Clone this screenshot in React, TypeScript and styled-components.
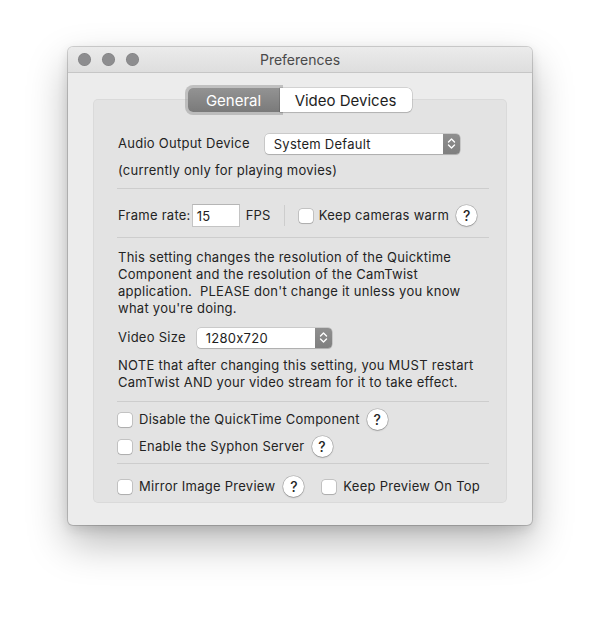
import React from "react";
import styled, { createGlobalStyle } from "styled-components";

const Global = createGlobalStyle`
  html, body { margin: 0; padding: 0; background: #ffffff; }
  body {
    font-family: Inter, "Liberation Sans", sans-serif;
    -webkit-font-smoothing: antialiased;
    font-feature-settings: "calt" 0;
  }
`;

const Stage = styled.div`
  width: 600px;
  height: 618px;
  padding: 47px 0 0 68px;
  box-sizing: border-box;
`;

const Window = styled.div`
  width: 464px;
  height: 478px;
  background: #ececec;
  border-radius: 5px;
  box-shadow: 0 0 0 1px rgba(0, 0, 0, 0.16), 0 18px 40px rgba(0, 0, 0, 0.28), 0 4px 12px rgba(0, 0, 0, 0.12);
  display: flex;
  flex-direction: column;
  overflow: hidden;
`;

const TitleBar = styled.div`
  height: 25px;
  flex: none;
  background: linear-gradient(#ebebeb, #dedede);
  border-bottom: 1px solid #c6c6c6;
  display: flex;
  align-items: center;
  position: relative;
  padding-left: 10px;
`;

const Lights = styled.div`
  display: flex;
  gap: 11px;
`;

const Light = styled.span`
  width: 13px;
  height: 13px;
  border-radius: 50%;
  background: #8d8d8f;
  box-shadow: inset 0 0 0 0.5px rgba(0, 0, 0, 0.15);
`;

const Title = styled.div`
  position: absolute;
  left: 0;
  right: 0;
  top: 0;
  bottom: 0;
  display: flex;
  align-items: center;
  justify-content: center;
  font-size: 14px;
  color: #4a4a4a;
  pointer-events: none;
`;

const Body = styled.div`
  flex: 1;
  display: flex;
  flex-direction: column;
  padding: 15px 25px 22px;
`;

const Tabs = styled.div`
  align-self: center;
  display: flex;
  height: 24px;
  margin-bottom: -13px;
  margin-left: -1px;
  position: relative;
  z-index: 1;
`;

const Tab = styled.div<{ $active?: boolean }>`
  display: flex;
  align-items: center;
  justify-content: center;
  font-size: 15px;
  box-sizing: border-box;
  ${(p) =>
    p.$active
      ? `
    width: 92px;
    color: #ffffff;
    background: linear-gradient(#939393, #7a7a7a);
    border-radius: 5px 0 0 5px;
    box-shadow: 0 0 0 3px rgba(140,140,140,0.45);
  `
      : `
    width: 132px;
    color: #1e1e1e;
    background: #ffffff;
    border-radius: 0 5px 5px 0;
    box-shadow: 0 0 0 0.5px rgba(0,0,0,0.22), 0 1px 1px rgba(0,0,0,0.12);
  `}
`;

const Group = styled.div`
  flex: 1;
  background: #e3e3e3;
  border-radius: 5px;
  box-shadow: inset 0 0 0 1px rgba(0, 0, 0, 0.04);
  padding: 34px 18px 0 25px;
  display: flex;
  flex-direction: column;
  color: #232323;
  font-size: 13px;
  letter-spacing: 0.26px;
`;

const Row = styled.div<{ $mt?: number; $h?: number }>`
  display: flex;
  align-items: center;
  margin-top: ${(p) => p.$mt ?? 0}px;
  height: ${(p) => p.$h ?? 21}px;
  white-space: nowrap;
`;

const Label = styled.span<{ $ml?: number }>`
  margin-left: ${(p) => p.$ml ?? 0}px;
  line-height: 17px;
`;

const Text = styled.div<{ $mt?: number }>`
  margin-top: ${(p) => p.$mt ?? 0}px;
  line-height: 17px;
  white-space: pre;
`;

const Sep = styled.div<{ $mt?: number }>`
  margin-top: ${(p) => p.$mt ?? 0}px;
  height: 1px;
  background: #cdcdcd;
  margin-left: -1px;
  flex: none;
`;

const VSep = styled.div`
  width: 1px;
  height: 21px;
  background: #cdcdcd;
  margin: 0 14px 0 13px;
`;

const Popup = styled.div<{ $w: number; $ml: number }>`
  width: ${(p) => p.$w}px;
  height: 20px;
  margin-left: ${(p) => p.$ml}px;
  background: #ffffff;
  border-radius: 4px;
  box-shadow: 0 0 0 0.5px rgba(0, 0, 0, 0.22), 0 1px 1px rgba(0, 0, 0, 0.14);
  display: flex;
  align-items: center;
  overflow: hidden;
`;

const PopupValue = styled.span`
  flex: 1;
  padding-left: 9px;
  color: #1e1e1e;
`;

const Stepper = styled.div`
  width: 17px;
  height: 100%;
  background: linear-gradient(#8f8f8f, #7f7f7f);
  display: flex;
  align-items: center;
  justify-content: center;
`;

const Field = styled.div`
  width: 48px;
  height: 23px;
  margin-left: 1px;
  box-sizing: border-box;
  background: #ffffff;
  border: 1px solid #c4c4c4;
  border-top-color: #b5b5b5;
  padding-left: 4px;
  display: flex;
  align-items: center;
  font-size: 13px;
`;

const Check = styled.span<{ $ml?: number }>`
  width: 14px;
  height: 14px;
  margin-left: ${(p) => p.$ml ?? 0}px;
  flex: none;
  background: #ffffff;
  border-radius: 3px;
  box-shadow: 0 0 0 0.5px rgba(0, 0, 0, 0.28), 0 1px 1px rgba(0, 0, 0, 0.12);
`;

const Help = styled.span<{ $ml?: number }>`
  width: 21px;
  height: 21px;
  margin-left: ${(p) => p.$ml ?? 0}px;
  flex: none;
  border-radius: 50%;
  background: #ffffff;
  box-shadow: 0 0 0 0.5px rgba(0, 0, 0, 0.25), 0 1px 1.5px rgba(0, 0, 0, 0.2);
  display: flex;
  align-items: center;
  justify-content: center;
  font-size: 14px;
  font-weight: 500;
  letter-spacing: 0;
  color: #262626;
`;

const StepIcon = () => (
  <svg width="9" height="13" viewBox="0 0 9 13">
    <path d="M1.5 5 L4.5 2 L7.5 5 M1.5 8 L4.5 11 L7.5 8" fill="none" stroke="#fff" strokeWidth="1.4" strokeLinecap="round" strokeLinejoin="round" />
  </svg>
);

export default function App() {
  return (
    <>
      <Global />
      <Stage>
        <Window>
          <TitleBar>
            <Lights>
              <Light />
              <Light />
              <Light />
            </Lights>
            <Title>Preferences</Title>
          </TitleBar>
          <Body>
            <Tabs>
              <Tab $active>General</Tab>
              <Tab>Video Devices</Tab>
            </Tabs>
            <Group>
              <Row $h={21}>
                <Label>Audio Output Device</Label>
                <Popup $w={195} $ml={15}>
                  <PopupValue>System Default</PopupValue>
                  <Stepper>
                    <StepIcon />
                  </Stepper>
                </Popup>
              </Row>
              <Text $mt={8}>(currently only for playing movies)</Text>
              <Sep $mt={9} />
              <Row $mt={15} $h={23}>
                <Label>Frame rate:</Label>
                <Field>15</Field>
                <Label $ml={6}>FPS</Label>
                <VSep />
                <Check />
                <Label $ml={6}>Keep cameras warm</Label>
                <Help $ml={7}>?</Help>
              </Row>
              <Sep $mt={10} />
              <Text $mt={11}>
                {"This setting changes the resolution of the Quicktime\nComponent and the resolution of the CamTwist\napplication.  PLEASE don't change it unless you know\nwhat you're doing."}
              </Text>
              <Row $mt={10} $h={21}>
                <Label>Video Size</Label>
                <Popup $w={135} $ml={11}>
                  <PopupValue>1280x720</PopupValue>
                  <Stepper>
                    <StepIcon />
                  </Stepper>
                </Popup>
              </Row>
              <Text $mt={9}>
                {"NOTE that after changing this setting, you MUST restart\nCamTwist AND your video stream for it to take effect."}
              </Text>
              <Sep $mt={10} />
              <Row $mt={7}>
                <Check />
                <Label $ml={7}>Disable the QuickTime Component</Label>
                <Help $ml={7}>?</Help>
              </Row>
              <Row $mt={6}>
                <Check />
                <Label $ml={7}>Enable the Syphon Server</Label>
                <Help $ml={7}>?</Help>
              </Row>
              <Sep $mt={6} />
              <Row $mt={12}>
                <Check />
                <Label $ml={7}>Mirror Image Preview</Label>
                <Help $ml={8}>?</Help>
                <Check $ml={18} />
                <Label $ml={7}>Keep Preview On Top</Label>
              </Row>
            </Group>
          </Body>
        </Window>
      </Stage>
    </>
  );
}
